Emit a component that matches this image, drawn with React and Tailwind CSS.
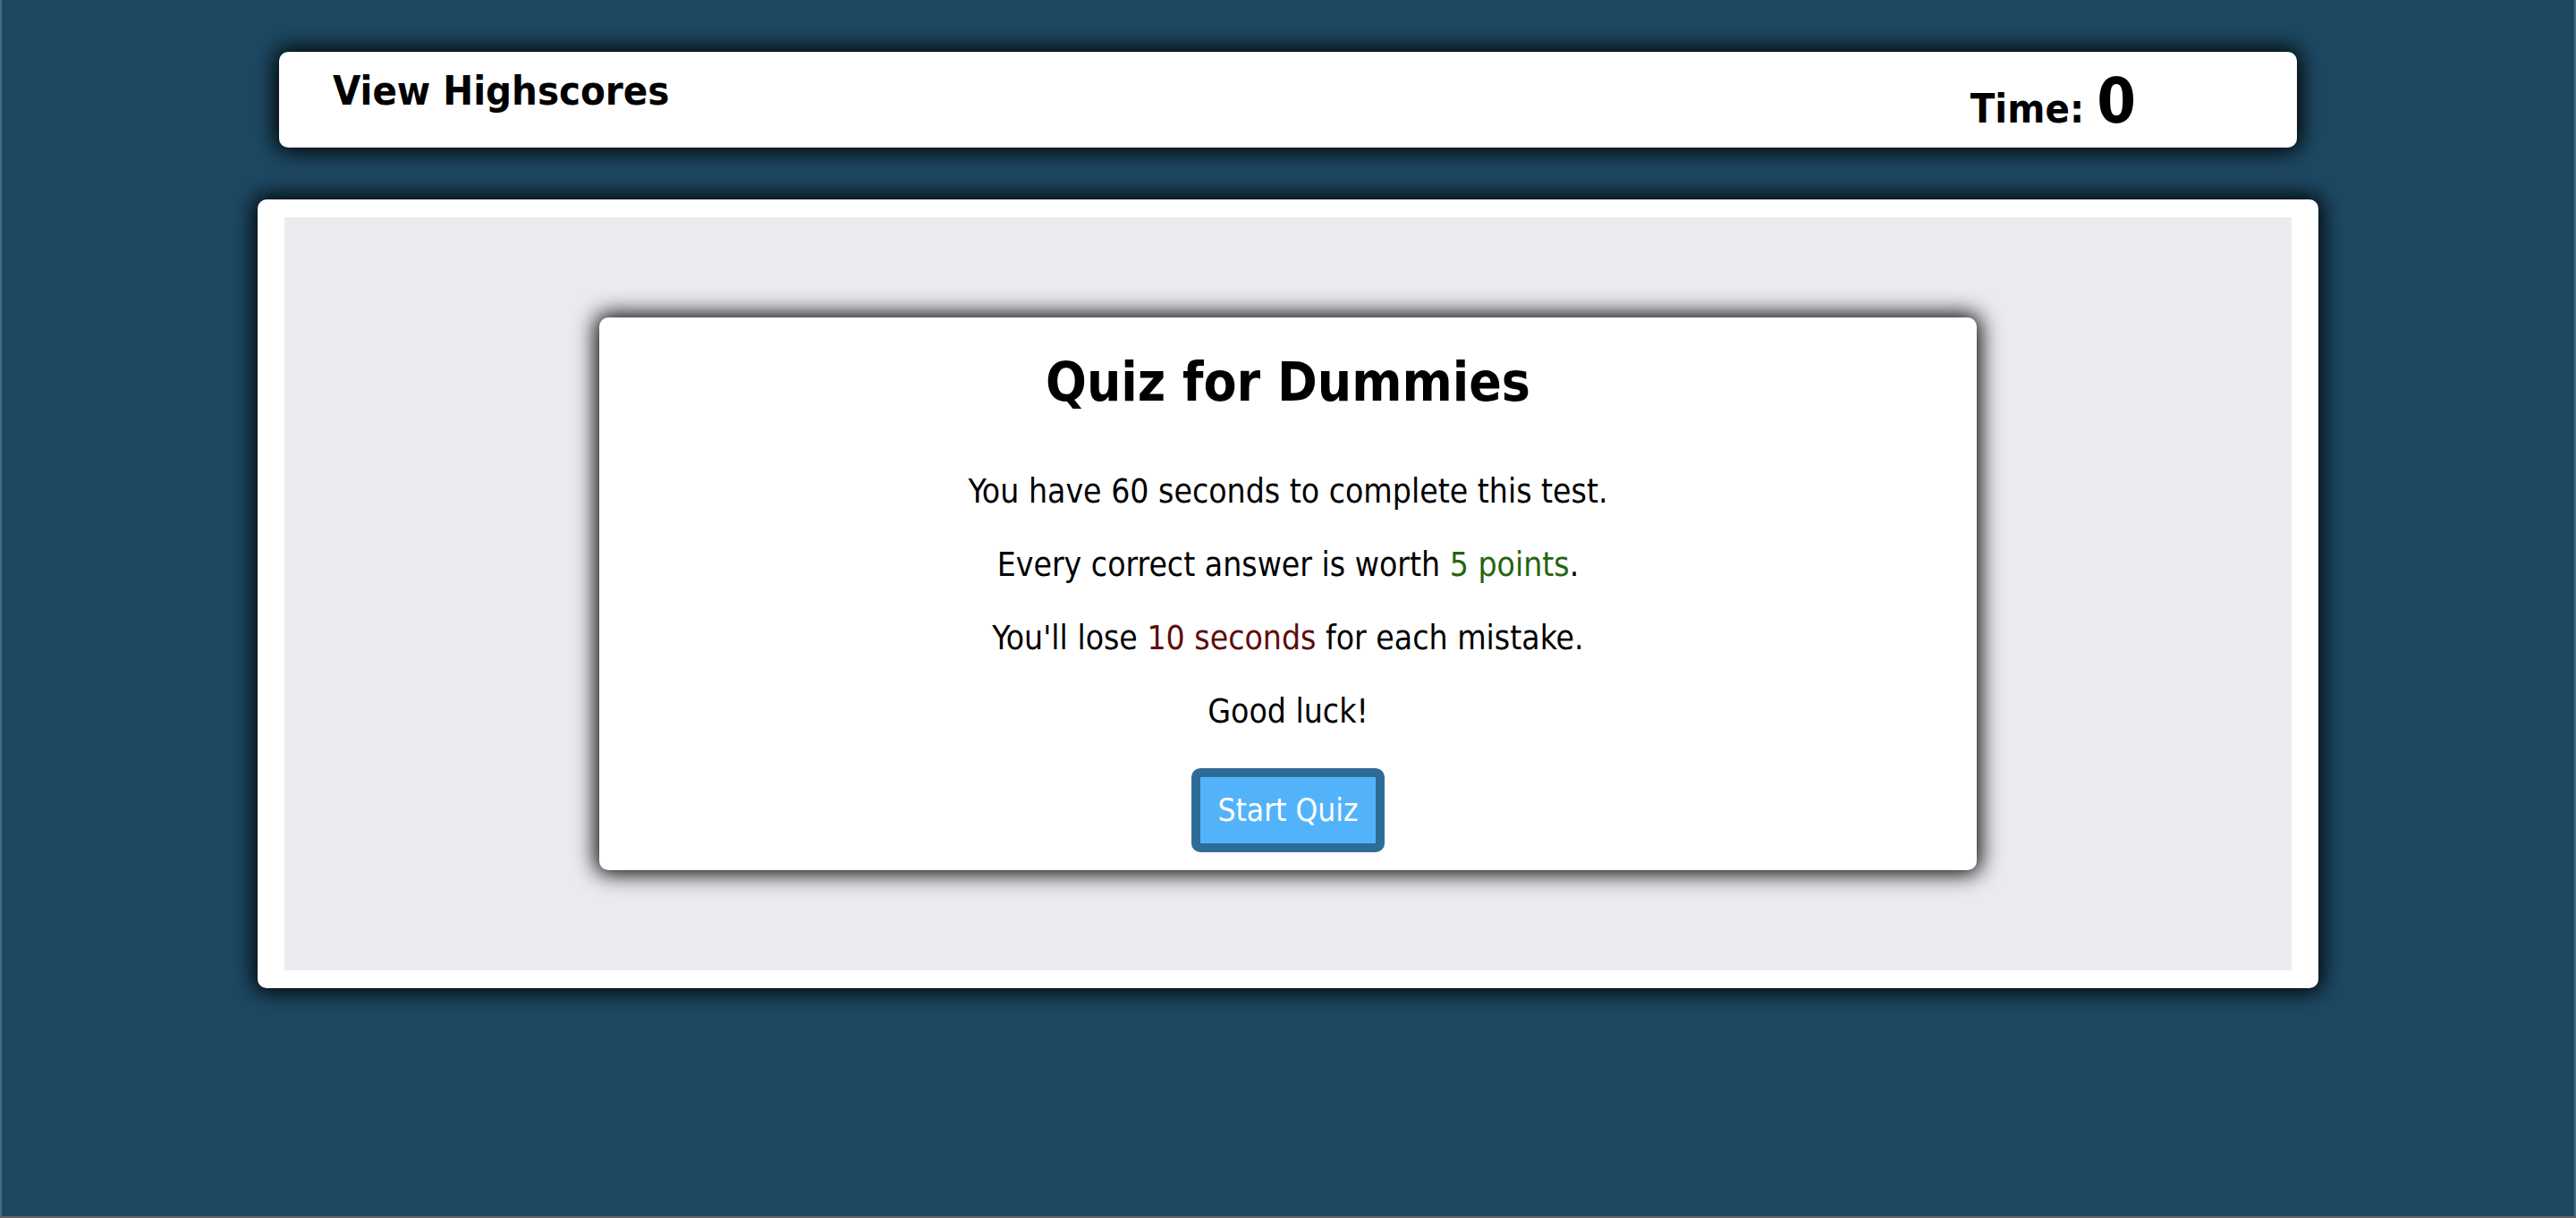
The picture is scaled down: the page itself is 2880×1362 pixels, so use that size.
const rules = [
  <>You have 60 seconds to complete this test.</>,
  <>
    Every correct answer is worth <span className="text-[#26640f]">5 points</span>.
  </>,
  <>
    You'll lose <span className="text-[#610b0b]">10 seconds</span> for each mistake.
  </>,
  <>Good luck!</>,
];

function TopBar() {
  return (
    <header className="mx-6 flex items-start justify-between rounded-[10px] bg-white pt-4 pr-45 pb-3 pl-15 font-bold shadow-[0_0_24px_4px_#000]">
      <a href="#highscores" className="text-[45px] leading-[56px]">
        View Highscores
      </a>
      <p className="text-[45px] leading-none">
        Time: <span className="text-[70px] leading-[79px]">0</span>
      </p>
    </header>
  );
}

function StartCard() {
  return (
    <section className="mx-auto flex w-[1540px] max-w-full flex-col items-center rounded-[10px] bg-white pt-9 pb-5 text-center shadow-[0_0_24px_4px_#000]">
      <h1 className="mb-[46px] text-[60px] leading-[72px] font-bold">Quiz for Dummies</h1>
      <div className="mb-[22px] flex flex-col text-[37px] leading-[82px]">
        {rules.map((rule, i) => (
          <p key={i}>{rule}</p>
        ))}
      </div>
      <button
        type="button"
        className="rounded-[10px] border-10 border-[#2e6c97] bg-[#53b3fa] px-5 py-3 text-[35px] leading-[50px] text-white"
      >
        Start Quiz
      </button>
    </section>
  );
}

export default function App() {
  return (
    <div className="min-h-screen bg-[#1d4862] pt-[58px] font-['Tahoma','DejaVu_Sans_Condensed','DejaVu_Sans',sans-serif] text-black shadow-[inset_0_-2px_#6a6468,inset_2px_0_#466b80,inset_-2px_0_#466b80]">
      <div className="mx-auto flex w-4/5 flex-col gap-[58px]">
        <TopBar />
        <main className="rounded-[10px] bg-white px-[30px] py-5 shadow-[0_0_24px_4px_#000]">
          <div className="bg-[#eaebef] py-28">
            <StartCard />
          </div>
        </main>
      </div>
    </div>
  );
}
